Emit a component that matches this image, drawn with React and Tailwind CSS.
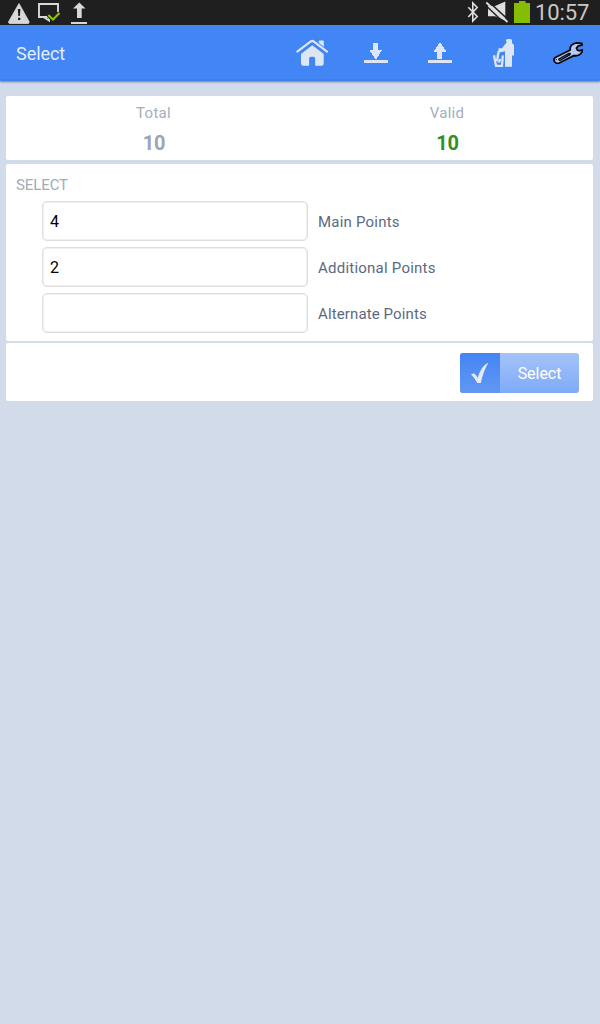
import React from "react";

const ICON = "#dfe6f3";

function StatusBar() {
  return (
    <div className="flex h-[25px] items-center justify-between bg-[#1f1f1f]">
      <svg width="100" height="25" viewBox="0 0 100 25">
        <path d="M19 3.5 L29 21.5 Q29.5 23.5 28 23.5 H10 Q8 23.5 8.7 21.5 Z" fill="#d8d8d8" stroke="#d8d8d8" strokeWidth="0.8" strokeLinejoin="round" />
        <path d="M17.8 9 h2.6 l-.5 7 h-1.6z M18 17.8 h2.3 v2.3 h-2.3z" fill="#1f1f1f" />
        <path d="M58 13 V4 H39 V17 H48 M43.5 17 L49 20.5 V17" fill="none" stroke="#d8d8d8" strokeWidth="1.9" />
        <path d="M48.3 15 L53 19.6 L59.5 13" fill="none" stroke="#1f1f1f" strokeWidth="4" />
        <path d="M48.3 15 L53 19.6 L59.5 13" fill="none" stroke="#8fc400" strokeWidth="2.1" />
        <path d="M79.3 2.5 L85.5 8.5 H81.7 V18 H77 V8.5 H73 Z M71 22 H87 V24 H71 Z" fill="#d8d8d8" />
      </svg>
      <div className="flex items-center">
        <svg width="75" height="25" viewBox="460 0 75 25">
          <path d="M468.3 7.2 L477.2 16.5 L472.8 21 V3 L477.2 7.5 L468.3 17" fill="none" stroke="#dedede" strokeWidth="1.6" />
          <path d="M488 6 H495 L505.3 1.5 V20.5 L495 16.2 H488 Z" fill="#dedede" />
          <path d="M485.3 5 L504.8 23.5" stroke="#1f1f1f" strokeWidth="1.4" />
          <path d="M488 1 L509 20.5" stroke="#1f1f1f" strokeWidth="1.6" />
          <path d="M486.3 2.5 L507.5 22" stroke="#dedede" strokeWidth="1.8" />
          <path d="M519 1 H525.5 V3 H530 V23 H514 V3 H519 Z" fill="#85bd00" />
        </svg>
        <span className="w-[65px] text-[22px] leading-[25px] tracking-[-0.1px] text-[#c9c9c9]">10:57</span>
      </div>
    </div>
  );
}

function HomeIcon() {
  return (
    <svg width="32" height="32" viewBox="0 0 32 32" fill={ICON}>
      <path d="M22.8 8 V4.2 Q22.8 3.4 23.6 3.4 H27 Q27.8 3.4 27.8 4.2 V11.8 Z" />
      <path d="M.9 15.1 L14.8 4 Q16.3 2.6 17.8 4 L31.5 15.1" fill="none" stroke="#4285f4" strokeWidth="3.5" />
      <path d="M1.3 14.6 L14.8 4.4 Q16.2 3.3 17.6 4.4 L31 14.6" fill="none" stroke={ICON} strokeWidth="2.1" strokeLinecap="round" />
      <path d="M16.3 8.2 L27.7 17 V26.5 Q27.7 28.8 25.4 28.8 H19.2 V21.5 Q19.2 19.8 17.5 19.8 H14.8 Q13.1 19.8 13.1 21.5 V28.8 H7.3 Q5 28.8 5 26.5 V17 Z" />
    </svg>
  );
}

function DownloadIcon() {
  return (
    <svg width="32" height="32" viewBox="0 0 32 32" fill={ICON} shapeRendering="crispEdges">
      <path d="M13 6 H18 V13 H22 L16.5 22 H15.5 L10 14 V13 H13 Z M4 23 H28 V26 H4 Z" />
    </svg>
  );
}

function UploadIcon() {
  return (
    <svg width="32" height="32" viewBox="0 0 32 32" fill={ICON} shapeRendering="crispEdges">
      <path d="M15.3 6 H16.5 L22 14 V15 H18 V22 H13 V15 H10 V14 Z M4 23 H28 V26 H4 Z" />
    </svg>
  );
}

function DisposeIcon() {
  return (
    <svg width="32" height="32" viewBox="0 0 32 32" fill={ICON}>
      <path d="M18 3 L19.5 2 H22.5 L24 3 V6 L26 8 V18.5 H24 V29.8 H17 V14.3 L13 15.3 L10.5 14.8 V11.3 H14 L17 7.3 L18.5 6 Z" />
      <path d="M6 18.3 L8 28.8 H14 L14.8 18.5 M10.8 14 L9.5 20 M10 19 L8.8 24 M12.5 22 L10.5 25.5" fill="none" stroke={ICON} strokeWidth="2.3" />
    </svg>
  );
}

function WrenchIcon() {
  return (
    <svg width="32" height="32" viewBox="0 0 32 32" strokeLinejoin="round">
      <path d="M2.8 20.8 L18.2 13 C17.5 9 20.5 6.4 24.5 5.8 L29.8 6.3 L30.2 8 L26.4 8.8 L24.4 11 L25.4 13.2 L28 13.8 L30.2 12.8 L30.2 14.6 C28 18.4 25 19.2 21.8 18.6 L7.2 26 C3.8 27.4 .4 23.6 2.8 20.8 Z" fill="#b7caf5" stroke="#080808" strokeWidth="1.8" />
      <path d="M6.8 22 L17 16.4 Q19 16 18 17.6 L8.4 23.2 Q6.4 23.6 6.8 22 Z" stroke="#080808" strokeWidth="1.3" fill="#4285f4" />
      <path d="M3.8 23 L4.8 22.4" stroke="#080808" strokeWidth="1.1" />
    </svg>
  );
}

const actions = [
  ["Home", HomeIcon],
  ["Download", DownloadIcon],
  ["Upload", UploadIcon],
  ["Discard", DisposeIcon],
  ["Tools", WrenchIcon],
];

function AppBar() {
  return (
    <header className="flex h-14 items-center justify-between border-b-2 border-[#4080e8] bg-[#4285f4] pl-4 shadow-[0_1px_2px_rgba(60,70,90,0.65)]">
      <h1 className="pt-[3px] text-[18px] tracking-[-0.05px] text-[#e5edfc]">Select</h1>
      <div className="flex pt-0.5">
        {actions.map(([label, Icon]) => (
          <button key={label} aria-label={label} className="flex w-16 justify-center">
            <Icon />
          </button>
        ))}
      </div>
    </header>
  );
}

function Stat({ label, value, color }) {
  return (
    <div className="flex flex-1 flex-col items-center pt-[7px] pl-[1.5px]">
      <span className="text-[15px] leading-5 tracking-[0.3px] text-[#a5aebb]">{label}</span>
      <span className={`mt-2 pl-px text-[20px] leading-6 font-bold tracking-[-0.2px] ${color}`}>{value}</span>
    </div>
  );
}

function Field({ label, value, tracking }) {
  return (
    <label className="flex h-10 items-center">
      <input
        defaultValue={value}
        className="h-10 w-[266px] rounded-[5px] border-[1.5px] border-[#dedede] bg-white px-[7px] pt-px text-[16px] text-black shadow-[inset_0_0_0_1px_#f0f0f0] outline-none"
      />
      <span className={`ml-2.5 pt-0.5 text-[15px] text-[#5b6a80] ${tracking}`}>{label}</span>
    </label>
  );
}

export default function App() {
  return (
    <div className="flex h-[1024px] w-[600px] flex-col bg-[#d2dbea] font-[Roboto,sans-serif]">
      <StatusBar />
      <AppBar />
      <main className="flex flex-col pt-[15px] pr-[7px] pl-1.5">
        <section className="flex h-16 rounded-[2px] bg-white">
          <Stat label="Total" value="10" color="text-[#9ca5b3]" />
          <Stat label="Valid" value="10" color="text-[#309122]" />
        </section>
        <section className="mt-1 h-[177px] rounded-[2px] bg-white pt-[11px]">
          <h2 className="pl-2.5 text-[15px] leading-5 tracking-[-0.1px] text-[#a2abb9]">SELECT</h2>
          <div className="mt-1.5 flex flex-col gap-1.5 pl-9">
            <Field label="Main Points" value="4" tracking="tracking-[0.22px]" />
            <Field label="Additional Points" value="2" tracking="tracking-[0.23px]" />
            <Field label="Alternate Points" value="" tracking="tracking-[0.12px]" />
          </div>
        </section>
        <section className="mt-0.5 flex h-[58px] items-center justify-end rounded-[2px] bg-white pt-0.5 pr-3.5">
          <button className="flex h-10 w-[119px] overflow-hidden rounded-[3px] bg-linear-to-b from-[#a5c3f9] to-[#7eaaf7]">
            <span className="flex h-full w-10 items-center justify-center bg-linear-to-b from-[#4285f4] to-[#6297f3]">
              <svg width="20" height="24" viewBox="0 0 20 24">
                <path d="M1 13.5 L4 12.3 Q6.5 14.5 7.7 17 Q11 5 18.5 1.5 Q13.3 10 10.8 22 H7.3 Q5 17 1 13.5 Z" fill="#e4eaf5" />
              </svg>
            </span>
            <span className="flex h-full flex-1 items-center justify-center pt-px text-[16px] tracking-[-0.05px] text-white">Select</span>
          </button>
        </section>
      </main>
    </div>
  );
}
